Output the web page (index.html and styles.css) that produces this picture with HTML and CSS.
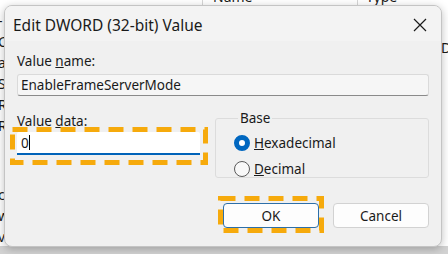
FILE: index.html
```html
<!DOCTYPE html>
<html lang="en">
<head>
    <meta charset="UTF-8">
    <title>Edit DWORD (32-bit) Value</title>
    <link rel="stylesheet" href="styles.css">
</head>
<body>
    <!-- registry editor behind the dialog -->
    <div class="behind">
        <div class="list-head">
            <span class="col col-name">Name</span>
            <span class="col col-type">Type</span>
        </div>
        <div class="tree-letters">
            <span>-</span><span>C</span><span>a</span><span>S</span><span>R</span><span>R</span>
            <span class="gap">c</span><span>w</span><span>v</span>
        </div>
        <div class="right-letter">D</div>
        <div class="status-strip"></div>
    </div>

    <div class="dialog">
        <div class="titlebar">
            <span class="title">Edit DWORD (32-bit) Value</span>
            <svg class="close" width="14" height="14" viewBox="0 0 14 14">
                <path d="M1 1 L13 13 M13 1 L1 13" stroke="#1a1a1a" stroke-width="1.2" fill="none"/>
            </svg>
        </div>
        <div class="content">
            <label class="label">Value <u>n</u>ame:</label>
            <div class="field field-name">EnableFrameServerMode</div>

            <div class="split">
                <div class="data-col">
                    <label class="label">Value <u>d</u>ata:</label>
                    <div class="field field-data">0<span class="caret"></span></div>
                    <svg class="mark mark-data" width="198" height="38" viewBox="0 0 198 38">
                        <rect x="2.5" y="2.5" width="193" height="33" fill="none" stroke="#f6aa0c" stroke-width="5" stroke-dasharray="15 9"/>
                    </svg>
                </div>
                <fieldset class="base">
                    <legend>Base</legend>
                    <div class="radio-row">
                        <span class="radio checked"></span><span><u>H</u>exadecimal</span>
                    </div>
                    <div class="radio-row">
                        <span class="radio"></span><span><u>D</u>ecimal</span>
                    </div>
                </fieldset>
            </div>

            <div class="buttons">
                <div class="ok-wrap">
                    <button class="btn btn-default">OK</button>
                    <svg class="mark mark-ok" width="106" height="37" viewBox="0 0 106 37">
                        <rect x="2.5" y="2.5" width="101" height="32" fill="none" stroke="#f6aa0c" stroke-width="5" stroke-dasharray="15 9"/>
                    </svg>
                </div>
                <button class="btn">Cancel</button>
            </div>
        </div>
    </div>
</body>
</html>
```

FILE: styles.css
```css
body {
    margin: 0;
    width: 448px;
    height: 254px;
    overflow: hidden;
    background: #ffffff;
    font-family: "Noto Sans", "Open Sans", sans-serif;
    color: #1a1a1a;
    position: relative;
}

.behind {
    position: absolute;
    inset: 0;
}
.list-head {
    position: absolute;
    left: 0;
    top: -12px;
    width: 448px;
    height: 17px;
    font-size: 14px;
    line-height: 17px;
}
.col {
    position: absolute;
    top: 0;
    height: 17px;
    border-left: 1px solid #d6d6d6;
}
.col-name { left: 202px; padding-left: 10px; }
.col-type { left: 357px; padding-left: 8px; }

.tree-letters {
    position: absolute;
    left: -2px;
    top: 10px;
    display: flex;
    flex-direction: column;
    font-size: 14px;
    line-height: 21px;
}
.tree-letters .gap { margin-top: 48px; }

.right-letter {
    position: absolute;
    left: 441px;
    top: 38px;
    font-size: 14px;
}
.status-strip {
    position: absolute;
    left: 0;
    right: 0;
    bottom: 0;
    height: 8px;
    background: #d2d2d2;
}

.dialog {
    position: absolute;
    left: 4px;
    top: 5px;
    width: 438px;
    height: 242px;
    background: #f0f0f0;
    border: 1px solid #c4c4c4;
    box-sizing: border-box;
    border-radius: 8px;
    box-shadow: 0 2px 8px rgba(0,0,0,0.25);
    overflow: hidden;
}
.titlebar {
    height: 35px;
    background: #f3f3f3;
    display: flex;
    align-items: center;
    justify-content: space-between;
    padding: 0 14px 0 8px;
}
.title {
    font-size: 15.5px;
    margin-top: 2px;
}
.close { margin-top: 2px; }

.content {
    padding: 11px 12px 0 12px;
    font-size: 13.5px;
}
.label {
    display: block;
    line-height: 18px;
}
.field {
    box-sizing: border-box;
    height: 22px;
    line-height: 20px;
    padding-left: 3px;
    border: 1px solid #dadada;
    border-bottom-color: #8a8a8a;
    border-radius: 3px;
    background: #f6f6f6;
}
.field-name {
    margin-top: 4px;
}

.split {
    display: flex;
    gap: 15px;
    margin-top: 14px;
}
.data-col {
    width: 183px;
    position: relative;
    padding-top: 2px;
}
.field-data {
    margin-top: 2px;
    height: 23px;
    background: #ffffff;
    border: none;
    border-bottom: 2px solid #0063b9;
    border-radius: 2px 2px 0 0;
    padding-left: 4px;
    line-height: 23px;
}
.caret {
    display: inline-block;
    width: 1px;
    height: 15px;
    background: #000;
    vertical-align: -2px;
}
.mark {
    position: absolute;
}
.mark-data {
    left: -7px;
    top: 17px;
}

.base {
    flex: 1;
    margin: 0;
    height: 68px;
    box-sizing: border-box;
    border: 1px solid #dcdcdc;
    border-radius: 3px;
    padding: 4px 0 0 18px;
}
.base legend {
    padding: 0 2px;
    margin-left: 4px;
    line-height: 16px;
}
.radio-row {
    display: flex;
    align-items: center;
    gap: 4px;
    height: 26px;
}
.radio {
    box-sizing: border-box;
    width: 16px;
    height: 16px;
    border-radius: 50%;
    border: 1px solid #5a5a5a;
    background: #f8f8f8;
}
.radio.checked {
    border: 5px solid #0067c0;
    background: #ffffff;
}

.buttons {
    display: flex;
    justify-content: flex-end;
    gap: 14px;
    margin-top: 25px;
}
.ok-wrap {
    position: relative;
}
.btn {
    width: 96px;
    height: 25px;
    box-sizing: border-box;
    font-family: inherit;
    font-size: 13.5px;
    color: #1a1a1a;
    background: #fdfdfd;
    border: 1px solid #d2d2d2;
    border-radius: 4px;
    padding: 0;
}
.btn-default {
    border-color: #2d6fa8;
}
.mark-ok {
    left: -5px;
    top: -7px;
}
```
